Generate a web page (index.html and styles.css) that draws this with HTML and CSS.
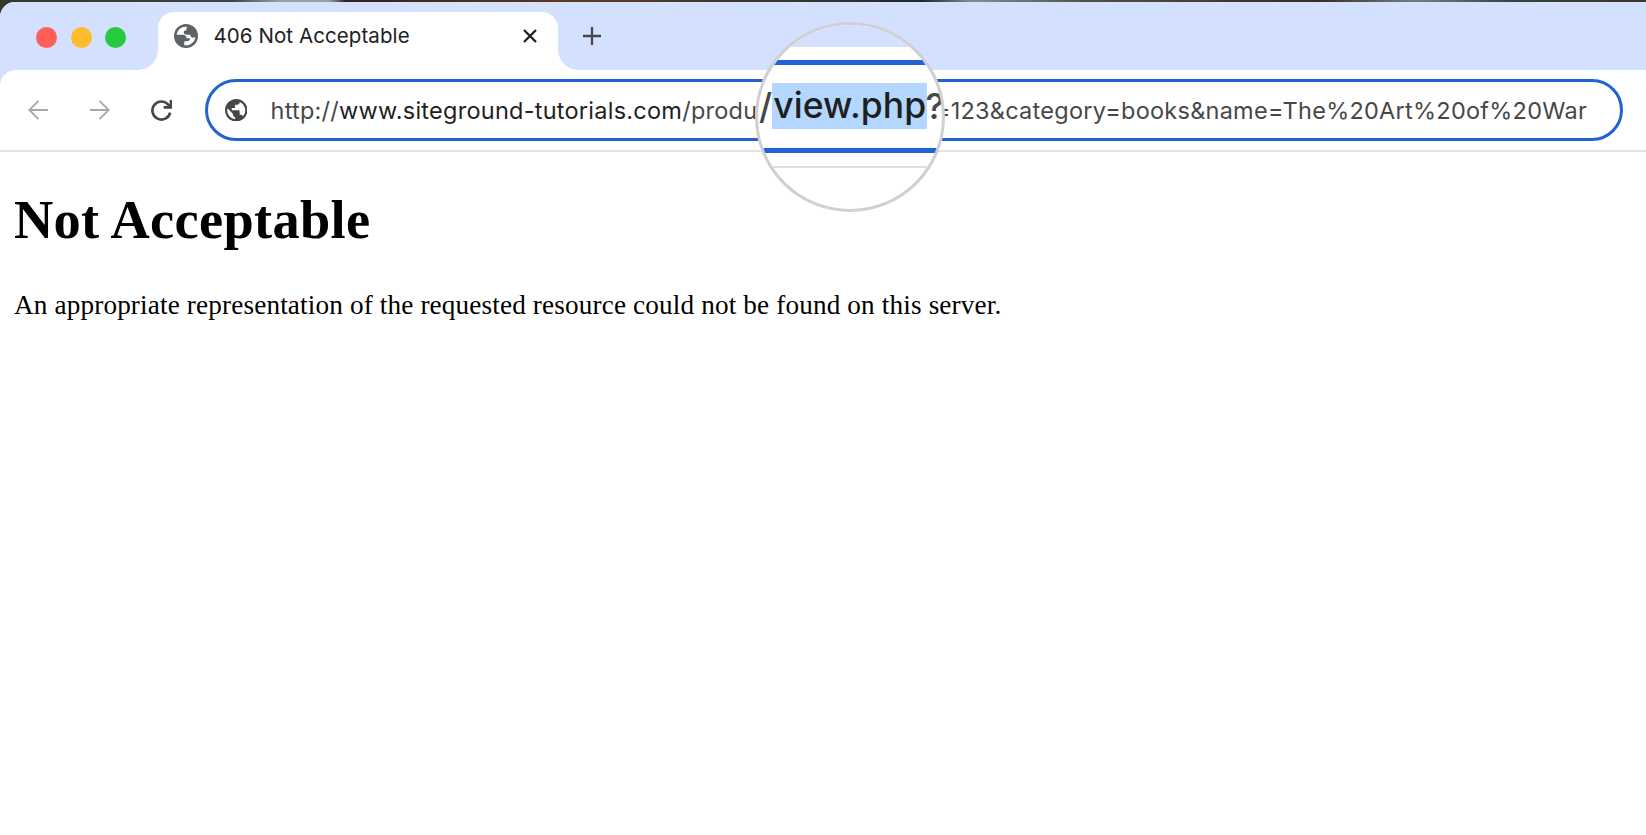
FILE: index.html
```html
<!DOCTYPE html>
<html lang="en">
<head>
  <meta charset="UTF-8" />
  <meta name="viewport" content="width=device-width, initial-scale=1.0" />
  <title>406 Not Acceptable</title>
  <link rel="stylesheet" href="styles.css">
</head>
<body>
  <div class="desktop"></div>
  <div class="window">
    <div class="tab-strip">
      <div class="lights">
        <span class="light red"></span>
        <span class="light yellow"></span>
        <span class="light green"></span>
      </div>
      <div class="tab">
        <svg class="favicon" viewBox="0 0 24 24"><circle cx="12" cy="12" r="12" fill="#5f6368"/><path fill="#fff" d="M13 2.800C7.500 2.300 3.200 6 2.700 10.800H8.500C11.300 10.800 12.600 12.200 12.600 14.300H16C16 16.300 14.900 17.300 13.200 17.300H10.300V21.200C16.200 22.200 21 18.200 21.300 12.800C20.300 13.600 19.200 13.900 18 13.500C16.600 13 16.200 11.900 16.200 10.800H12.800C10.600 10.800 9.400 9.600 9.700 8C9.900 6.900 10.900 6.200 12.200 6.200Z"/></svg>
        <span class="tab-title">406 Not Acceptable</span>
        <svg class="close" viewBox="0 0 14 14"><path d="M1 1L13 13M13 1L1 13"/></svg>
      </div>
      <svg class="new-tab" viewBox="0 0 18 18"><path d="M9 0V18M0 9H18"/></svg>
    </div>
    <div class="toolbar">
      <svg class="nav" viewBox="0 0 20 20"><path d="M20 10H2M10.500 .8L1.300 10L10.500 19.200"/></svg>
      <svg class="nav" viewBox="0 0 20 20"><path d="M0 10H18M9.500 .8L18.700 10L9.500 19.200"/></svg>
      <svg class="nav reload" viewBox="0 0 20 20"><path d="M18.300 12A8.600 8.600 0 1 1 16.600 4.600L18.600 6.600M19 0V7H12"/></svg>
      <div class="omnibox">
        <svg class="globe" viewBox="2 2 20 20"><path d="M12 2C6.480 2 2 6.480 2 12s4.480 10 10 10 10-4.480 10-10S17.520 2 12 2zm-1 17.930c-3.950-.49-7-3.850-7-7.930 0-.62.080-1.210.210-1.790L9 15v1c0 1.100.9 2 2 2v1.930zm6.900-2.540c-.26-.81-1-1.390-1.900-1.390h-1v-3c0-.55-.45-1-1-1H8v-2h2c.55 0 1-.45 1-1V7h2c1.100 0 2-.9 2-2v-.41c2.930 1.190 5 4.060 5 7.410 0 2.080-.8 3.970-2.100 5.390z"/></svg>
        <div class="url">
          <span>http://<b>www.siteground-tutorials.com</b>/produ</span>
          <span class="query">=123&amp;category=books&amp;name=The%20Art%20of%20War</span>
        </div>
      </div>
    </div>
    <main>
      <h1>Not Acceptable</h1>
      <p>An appropriate representation of the requested resource could not be found on this server.</p>
    </main>
  </div>

  <!-- Magnifier over the address bar -->
  <div class="lens">
    <div class="lens-strip"></div>
    <div class="lens-box"><span>/</span><mark>view.php</mark><span class="lens-end">?</span></div>
    <div class="lens-line"></div>
  </div>
</body>
</html>
```

FILE: styles.css
```css
body {
  margin: 0;
  height: 835px;
  overflow: hidden;
  position: relative;
  background: #fff;
  font-family: Inter, "Liberation Sans", sans-serif;
}
.desktop {
  height: 16px;
  margin-bottom: -14px;
  background: linear-gradient(90deg, #33382c 0, #3f4238 14%, #8fa5a5 17%, #8fa5a5 20%, #2e241d 21%, #5b3a25 35%, #35382f 48%, #23282a 56%, #7b9093 59%, #4f5243 66%, #3c2b20 80%, #708080 86%, #36433a 92%, #3d372d 100%);
}
.window {
  position: relative;
  background: #fff;
  border-radius: 15px 0 0 0;
  overflow: hidden;
}
.tab-strip {
  display: flex;
  height: 68px;
  background: #d3e1ff;
}
.lights {
  display: flex;
  gap: 13.500px;
  width: 122px;
  padding: 24.500px 0 0 36px;
}
.light {
  width: 21px;
  height: 21px;
  border-radius: 50%;
}
.red { background: #ff5f57; }
.yellow { background: #febc2e; }
.green { background: #28c840; }
.tab {
  position: relative;
  display: flex;
  align-items: center;
  box-sizing: border-box;
  width: 400px;
  margin-top: 10px;
  padding: 0 21px 10px 16px;
  background: #fff;
  border-radius: 16px 16px 0 0;
}
/* outward curves at the foot of the tab */
.tab::before,
.tab::after {
  content: "";
  position: absolute;
  bottom: 0;
  width: 20px;
  height: 20px;
}
.tab::before {
  right: 100%;
  background: radial-gradient(circle at 0 0, transparent 19.500px, #fff 20px);
}
.tab::after {
  left: 100%;
  background: radial-gradient(circle at 100% 0, transparent 19.500px, #fff 20px);
}
.favicon {
  width: 24px;
  height: 24px;
  margin-right: 15.500px;
}
.tab-title {
  flex: 1;
  padding-bottom: 1px;
  font-size: 20.500px;
  letter-spacing: .08px;
  white-space: nowrap;
  color: #202124;
}
.close {
  width: 14px;
  height: 14px;
  fill: none;
  stroke: #202124;
  stroke-width: 2.400;
}
.new-tab {
  width: 18px;
  height: 18px;
  margin: 25px 0 0 25px;
  fill: none;
  stroke: #474747;
  stroke-width: 2.300;
}
.toolbar {
  display: flex;
  align-items: center;
  box-sizing: border-box;
  height: 82px;
  padding: 0 23px 0 28px;
  border-bottom: 2px solid #e3e3e3;
  background: radial-gradient(circle at 15px 15px, #fff 14.500px, #d3e1ff 15px) 0 0 / 15px 15px no-repeat;
}
.nav {
  width: 20px;
  height: 20px;
  margin-right: 41.500px;
  fill: none;
  stroke: #a8a8a8;
  stroke-width: 1.900;
}
.reload {
  width: 21px;
  height: 21px;
  margin-right: 33px;
  stroke: #474747;
  stroke-width: 2.500;
}
.omnibox {
  flex: 1;
  display: flex;
  align-items: center;
  box-sizing: border-box;
  height: 62px;
  padding: 0 33px 0 16.500px;
  border: 3px solid #2163d2;
  border-radius: 31px;
}
.globe {
  width: 22.500px;
  height: 22.500px;
  margin-right: 23.500px;
  fill: #474747;
}
.url {
  flex: 1;
  display: flex;
  justify-content: space-between;
  font-size: 23.500px;
  letter-spacing: .25px;
  color: #474747;
  white-space: nowrap;
}
.url b {
  font-weight: 400;
  color: #1f1f1f;
}
main {
  padding: 0 14px;
  font-family: "Liberation Serif", serif;
  color: #000;
}
h1 {
  margin: 36px 0 37px;
  font-size: 54.400px;
  line-height: 64px;
  letter-spacing: .32px;
}
p {
  margin: 0;
  font-size: 27.200px;
  line-height: 33px;
  letter-spacing: .15px;
}
.lens {
  position: absolute;
  left: 755px;
  top: 22px;
  box-sizing: border-box;
  width: 190px;
  height: 190px;
  border: 3px solid #d0d0d2;
  border-radius: 50%;
  background: #fff;
  overflow: hidden;
}
.lens-strip {
  height: 22px;
  margin-bottom: 13px;
  background: #d3e1ff;
}
.lens-box {
  display: flex;
  align-items: center;
  box-sizing: border-box;
  height: 93px;
  padding-left: 1px;
  border: solid #2163d2;
  border-width: 5px 0;
  font-size: 35.500px;
  font-weight: 450;
  color: #474747;
}
.lens-box mark {
  height: 46px;
  line-height: 45px;
  margin-bottom: 1px;
  padding: 0 1px;
  letter-spacing: .1px;
  background: #b4d7ff;
  color: #1f1f1f;
}
.lens-end {
  margin-left: -2px;
}
.lens-line {
  margin-top: 13px;
  height: 2px;
  background: #dedede;
}
```
